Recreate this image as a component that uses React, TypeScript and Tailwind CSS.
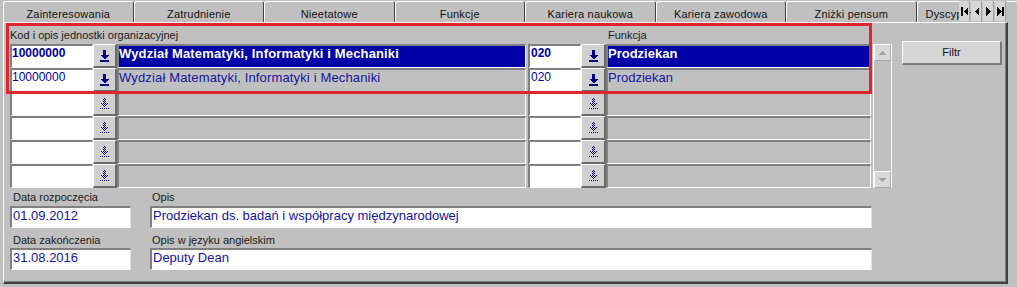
import React from "react";

const tabs = [
  "Zainteresowania",
  "Zatrudnienie",
  "Nieetatowe",
  "Funkcje",
  "Kariera naukowa",
  "Kariera zawodowa",
  "Zniżki pensum",
];

function DownIcon({ disabled }: { disabled?: boolean }) {
  const fill = disabled ? "url(#dither)" : "#000080";
  return (
    <svg width="9" height="12" viewBox="0 0 9 12" shapeRendering="crispEdges">
      <rect x="3" y="0" width="3" height="5" fill={fill} />
      <polygon points="0,5 9,5 4.5,9.5" fill={fill} />
      <rect x="0" y="10" width="9" height={disabled ? 1 : 2} fill={fill} />
    </svg>
  );
}

function LookupBtn({ w, disabled }: { w: string; disabled?: boolean }) {
  return (
    <div
      className={`${w} h-[24px] shrink-0 bg-[#d0d0d0] border-t border-l border-t-white border-l-white border-b-2 border-r-2 border-b-[#6a6a6a] border-r-[#6a6a6a] flex items-center justify-center`}
    >
      <DownIcon disabled={disabled} />
    </div>
  );
}

type RowProps = {
  code?: string;
  desc?: string;
  fcode?: string;
  fdesc?: string;
  selected?: boolean;
  disabled?: boolean;
};

function Row({ code, desc, fcode, fdesc, selected, disabled }: RowProps) {
  const white =
    "bg-white border-t-2 border-l-2 border-t-[#808080] border-l-[#808080] border-b border-r border-b-white border-r-white overflow-hidden whitespace-nowrap";
  const gray =
    "border-t-2 border-l-2 border-t-[#808080] border-l-[#808080] border-b border-r border-b-white border-r-white overflow-hidden whitespace-nowrap text-[13px] leading-[15px]";
  return (
    <div className="flex h-[24px]">
      <div
        className={`w-[83px] h-[24px] shrink-0 ${white} text-[12px] leading-[14px] text-[#0000a0] ${selected ? "font-bold" : ""}`}
      >
        {code}
      </div>
      <LookupBtn w="w-[24px]" disabled={disabled} />
      <div
        className={`w-[409px] h-[24px] shrink-0 ${gray} tracking-[0.15px] ${selected ? "bg-[#0000a8] text-white font-bold" : "bg-[#c0c0c0] text-[#1414a0]"}`}
      >
        {desc}
      </div>
      <div className="w-[2px] shrink-0" />
      <div
        className={`w-[53px] h-[24px] shrink-0 ${white} pl-[1px] text-[12px] leading-[14px] text-[#0000a0] ${selected ? "font-bold" : ""}`}
      >
        {fcode}
      </div>
      <LookupBtn w="w-[25px]" disabled={disabled} />
      <div
        className={`w-[265px] h-[24px] shrink-0 ${gray} ${selected ? "bg-[#0000a8] text-white font-bold" : "bg-[#c0c0c0] text-[#1414a0]"}`}
      >
        {fdesc}
      </div>
    </div>
  );
}

function ScrollBtn({ up }: { up?: boolean }) {
  return (
    <div className="h-[17px] shrink-0 bg-[#d8d8d8] border-t border-l border-t-white border-l-white border-b border-r border-b-[#a8a8a8] border-r-[#a8a8a8] flex items-center justify-center">
      <svg width="7" height="4" viewBox="0 0 7 4" shapeRendering="crispEdges">
        {up ? (
          <polygon points="0,4 7,4 3.5,0" fill="#a0a0a0" />
        ) : (
          <polygon points="0,0 7,0 3.5,4" fill="#a0a0a0" />
        )}
      </svg>
    </div>
  );
}

function NavBtn({ kind }: { kind: "first" | "prev" | "next" | "last" }) {
  return (
    <div className="w-[11px] h-[20px] bg-[#d6d6d6] border-r border-r-[#a0a0a0] flex items-center justify-center">
      <svg width="7" height="9" viewBox="0 0 7 9" shapeRendering="crispEdges">
        {kind === "first" && (
          <>
            <rect x="0" y="0" width="2" height="9" fill="#000" />
            <polygon points="7,0 7,9 2.5,4.5" fill="#000" />
          </>
        )}
        {kind === "prev" && <polygon points="6,0 6,9 1.5,4.5" fill="#000" />}
        {kind === "next" && <polygon points="1,0 1,9 5.5,4.5" fill="#000" />}
        {kind === "last" && (
          <>
            <polygon points="0,0 0,9 4.5,4.5" fill="#000" />
            <rect x="5" y="0" width="2" height="9" fill="#000" />
          </>
        )}
      </svg>
    </div>
  );
}

export default function App() {
  const inputCls =
    "h-[22px] shrink-0 bg-white border-t-2 border-l-2 border-t-[#808080] border-l-[#808080] border-b border-r border-b-white border-r-[#e0e0e0] pl-[1px] text-[13px] leading-[15px] text-[#1414a0] whitespace-nowrap overflow-hidden";
  return (
    <div className="relative w-[1017px] h-[287px] overflow-hidden bg-[#c0c0c0] font-['Liberation_Sans',Arial,sans-serif] text-black">
      <svg width="0" height="0" className="absolute">
        <defs>
          <pattern id="dither" width="2" height="2" patternUnits="userSpaceOnUse">
            <rect x="0" y="0" width="1" height="1" fill="#000080" />
            <rect x="1" y="1" width="1" height="1" fill="#000080" />
          </pattern>
        </defs>
      </svg>

      {/* Tab strip */}
      <div className="flex h-[22px] pl-[3px] pt-[1px]">
        {tabs.map((t) => (
          <div
            key={t}
            className="w-[130.5px] h-[21px] shrink-0 border-t border-l border-t-white border-l-white border-r border-r-[#404040] rounded-t-[3px] pt-[5px] leading-[14px] text-center text-[11px] tracking-[0.2px] text-[#111]"
          >
            {t}
          </div>
        ))}
        <div className="flex-1 h-[21px] border-t border-l border-t-white border-l-white rounded-tl-[3px] pl-[8px] pt-[5px] leading-[14px] text-[11px] tracking-[0.2px] text-[#111] overflow-hidden whitespace-nowrap">
          Dyscypliny
        </div>
      </div>
      <div className="absolute top-[1px] left-[959px] flex gap-[1px]">
        <NavBtn kind="first" />
        <NavBtn kind="prev" />
        <NavBtn kind="next" />
        <NavBtn kind="last" />
      </div>

      {/* Panel */}
      <div className="ml-[3px] w-[1005px] h-[262px] border-t border-l border-t-white border-l-white border-r-2 border-b-2 border-r-[#404040] border-b-[#404040] shadow-[inset_-1px_-1px_0_#808080] pl-[6px] pt-[4px] flex flex-col">
        <div className="flex">
          <div className="flex flex-col">
            <div className="flex h-[17px] leading-[17px] text-[11px] text-[#1a1a1a]">
              <div className="w-[598px]">Kod i opis jednostki organizacyjnej</div>
              <div>Funkcja</div>
            </div>
            <div className="flex">
              <div className="flex flex-col w-[861px]">
                <Row
                  code="10000000"
                  desc="Wydział Matematyki, Informatyki i Mechaniki"
                  fcode="020"
                  fdesc="Prodziekan"
                  selected
                />
                <Row
                  code="10000000"
                  desc="Wydział Matematyki, Informatyki i Mechaniki"
                  fcode="020"
                  fdesc="Prodziekan"
                />
                <Row disabled />
                <Row disabled />
                <Row disabled />
                <Row disabled />
              </div>
              <div className="ml-[2px] w-[19px] h-[144px] flex flex-col bg-[#c0c0c0] border-l border-l-white border-r border-r-white">
                <ScrollBtn up />
                <div className="flex-1" />
                <ScrollBtn />
              </div>
            </div>
          </div>
          <div className="ml-[10px] mt-[14px] w-[100px] h-[24px] bg-[#d6d6d6] border-t border-l border-t-white border-l-white border-b-2 border-r-2 border-b-[#7a7a7a] border-r-[#7a7a7a] flex items-center justify-center text-[11px] text-[#111]">
            Filtr
          </div>
        </div>

        <div className="mt-[1px] flex flex-col">
          <div className="flex h-[17px] leading-[17px] text-[11px] text-[#1a1a1a]">
            <div className="w-[140px] pl-[3px]">Data rozpoczęcia</div>
            <div className="pl-[2px]">Opis</div>
          </div>
          <div className="flex">
            <div className={`w-[121px] ${inputCls}`}>01.09.2012</div>
            <div className={`ml-[19px] w-[722px] ${inputCls}`}>
              Prodziekan ds. badań i współpracy międzynarodowej
            </div>
          </div>
          <div className="mt-[4px] flex h-[16px] leading-[16px] text-[11px] text-[#1a1a1a]">
            <div className="w-[140px] pl-[3px]">Data zakończenia</div>
            <div className="pl-[2px]">Opis w języku angielskim</div>
          </div>
          <div className="flex">
            <div className={`w-[121px] ${inputCls}`}>31.08.2016</div>
            <div className={`ml-[19px] w-[722px] ${inputCls}`}>Deputy Dean</div>
          </div>
        </div>
      </div>

      {/* Annotation frame */}
      <div className="absolute left-[6px] top-[23px] w-[866px] h-[71px] border-[3px] border-[#e0252d] pointer-events-none" />
    </div>
  );
}
